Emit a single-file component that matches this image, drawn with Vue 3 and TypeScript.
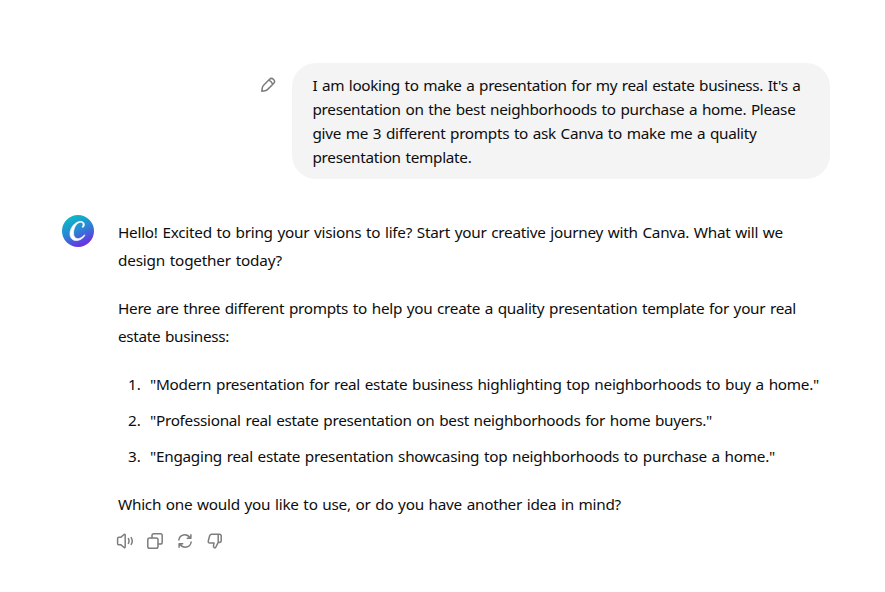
<script setup lang="ts">
import { onMounted, ref } from 'vue'

interface Line { text: string; width: number }
const question: Line[] = [
  { text: "I am looking to make a presentation for my real estate business. It's a", width: 488 },
  { text: 'presentation on the best neighborhoods to purchase a home. Please', width: 483 },
  { text: 'give me 3 different prompts to ask Canva to make me a quality', width: 444 },
  { text: 'presentation template.', width: 159 },
]
const paragraphs: Line[][] = [
  [
    { text: 'Hello! Excited to bring your visions to life? Start your creative journey with Canva. What will we', width: 665 },
    { text: 'design together today?', width: 164 },
  ],
  [
    { text: 'Here are three different prompts to help you create a quality presentation template for your real', width: 678 },
    { text: 'estate business:', width: 111 },
  ],
]
const prompts: Line[] = [
  { text: '"Modern presentation for real estate business highlighting top neighborhoods to buy a home."', width: 669 },
  { text: '"Professional real estate presentation on best neighborhoods for home buyers."', width: 562 },
  { text: '"Engaging real estate presentation showcasing top neighborhoods to purchase a home."', width: 625 },
]
const closing: Line = { text: 'Which one would you like to use, or do you have another idea in mind?', width: 503 }

// Tracking for each line, so that it sets to its measure.
const root = ref<HTMLElement>()
const tracking = ref<Record<string, string>>({})
onMounted(() => {
  const all = [...question, ...paragraphs.flat(), ...prompts, closing]
  const spans = root.value!.querySelectorAll<HTMLElement>('.line')
  const next: Record<string, string> = {}
  all.forEach((l, i) => {
    const natural = spans[i].getBoundingClientRect().width
    next[l.text] = `${((l.width - natural) / l.text.length).toFixed(4)}px`
  })
  tracking.value = next
})
const track = (l: Line) => ({ letterSpacing: tracking.value[l.text] ?? '0px' })
</script>

<template>
  <main ref="root" class="chat">
    <section class="user-row">
      <button class="edit" aria-label="Edit">
        <svg width="16" height="16" viewBox="0 0 16 16"><path d="M1.8 14.200 2.300 10.900Q2.500 9.300 3.600 8.200L9.500 2.300C12.200-.3 16.300 3.800 13.600 6.500L7.700 12.400Q6.600 13.500 5.100 13.700ZM8.900 3.100Q11.500 4.400 12.700 7.100" /></svg>
      </button>
      <p class="bubble"><span v-for="l in question" :key="l.text" class="line" :style="track(l)">{{ l.text }}</span></p>
    </section>
    <section class="reply">
      <svg class="avatar" width="32" height="32" viewBox="0 0 32 32">
        <defs><linearGradient id="g" x1="0.25" y1="0" x2="0.7" y2="1"><stop offset="0" stop-color="#08bfc5" /><stop offset=".5" stop-color="#2b84d5" /><stop offset="1" stop-color="#7424e4" /></linearGradient></defs>
        <circle cx="16" cy="16" r="16" fill="url(#g)" />
        <path class="mark" d="M20.800 12.600C23.500 10.700 22.800 6.400 18.800 6.400 12.800 6.400 8 13 8 18.800 8 27 17.500 28 23 20.400L22.300 20C17.800 25.300 11.500 25 11.500 18 11.500 13 14.600 7.200 18.900 7.200 21.200 7.200 21.700 9.700 20.200 12Z" />
      </svg>
      <div class="content">
        <p v-for="(p, i) in paragraphs" :key="i"><span v-for="l in p" :key="l.text" class="line" :style="track(l)">{{ l.text }}</span></p>
        <ol><li v-for="(l, i) in prompts" :key="l.text"><span class="num">{{ i + 1 }}.</span><span class="line" :style="track(l)">{{ l.text }}</span></li></ol>
        <p><span class="line" :style="track(closing)">{{ closing.text }}</span></p>
        <div class="actions">
          <button aria-label="Read aloud"><svg width="18" height="18" viewBox="0 0 18 18"><path d="M9.200 3.200V14.800Q9.200 16 8.100 15.500L4.700 12.700H2.900Q1.600 12.700 1.600 11.400V6.600Q1.600 5.300 2.900 5.300H4.700L8.100 2.500Q9.200 2 9.200 3.200ZM12.400 6.600Q13.600 9 12.400 11.400M15.200 5.600Q17.300 9 15.200 12.400" /></svg></button>
          <button aria-label="Copy"><svg width="18" height="18" viewBox="0 0 18 18"><rect x="1.800" y="6" width="10.200" height="10.200" rx="1.800" /><path d="M6 6V3.600Q6 1.800 7.800 1.800H14.400Q16.200 1.800 16.200 3.600V10.200Q16.200 12 14.400 12H12" /></svg></button>
          <button aria-label="Regenerate"><svg width="18" height="18" viewBox="0 0 18 18"><path d="M2.900 8C3.600 2.400 10.600 1 14 5.800M14.900 2.700V6.200H11.300M15.100 10C14.400 15.600 7.400 17 4 12.200M3.100 15.300V11.800H6.700" /></svg></button>
          <button aria-label="Bad response"><svg width="18" height="18" viewBox="0 0 18 18"><path d="M12.200 2.200V9.800M12.200 10.400 9.900 15Q9.300 16.300 8.300 15.700 7.200 15 7.500 13.600L8 11H4Q1.800 11 2.300 8.900L3.600 4Q4.100 2.200 5.900 2.200H13.400Q15.200 2.200 15.200 4V8.600Q15.200 10.400 13.400 10.400H12.200" /></svg></button>
        </div>
      </div>
    </section>
  </main>
</template>

<style>
body { background: #fff; }
</style>
<style scoped>
.chat { width: 885px; height: 592px; box-sizing: border-box; padding: 63px 55px 0 62px; font: 15.3px/28px "Noto Sans", sans-serif; word-spacing: 1px; color: #0d0d0d; }
.user-row { display: flex; justify-content: flex-end; gap: 16px; }
button { border: 0; background: none; padding: 0; }
button svg { display: block; fill: none; stroke: #7d7d7d; stroke-width: 1.5; stroke-linecap: round; stroke-linejoin: round; }
.edit { padding: 14px 0; height: 44px; }
.bubble { width: 538px; height: 116px; box-sizing: border-box; margin: 0; padding: 10px 20px 10px 20.5px; border-radius: 24px; background: #f4f4f4; line-height: 24px; }
.line { display: block; width: max-content; white-space: nowrap; }
.reply { display: flex; gap: 24px; margin-top: 36px; }
.avatar { flex: none; }
.content { padding-top: 3px; }
.content p { margin: 0 0 20px; }
.mark { fill: #fff; stroke: #fff; stroke-width: 0.7; }
ol { list-style: none; padding: 0; margin: 0 0 20px; display: grid; gap: 8px; }
li { display: flex; }
.num { width: 32px; padding-left: 10px; box-sizing: border-box; }
.content p:last-of-type { margin-bottom: 0; }
.actions { display: flex; gap: 12px; margin: 14px 0 0 -2px; }
</style>
